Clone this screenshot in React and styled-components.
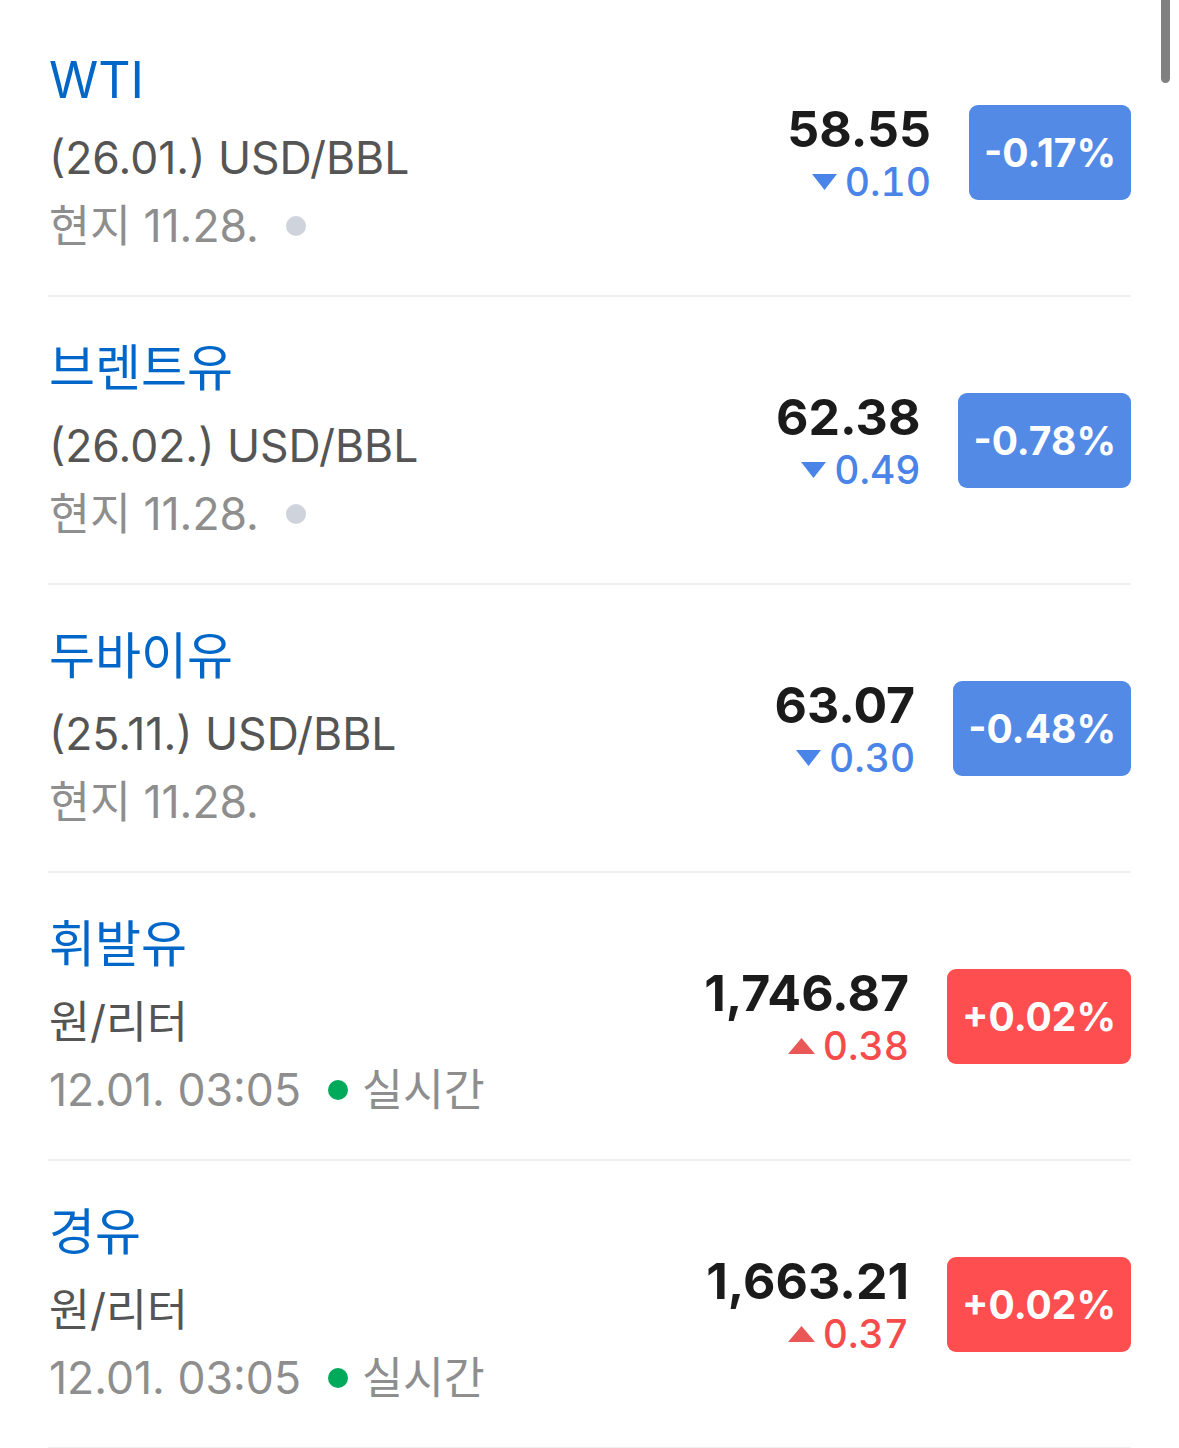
import React from "react";
import styled, { createGlobalStyle } from "styled-components";

const Global = createGlobalStyle`
  html, body { margin: 0; padding: 0; background: #fff; }
  body { font-family: Inter, "Noto Sans CJK KR", sans-serif; -webkit-font-smoothing: antialiased; }
`;

const Page = styled.div`
  position: relative;
  padding: 9px 48px 0 49px;
  background: #fff;
`;

const ScrollThumb = styled.div`
  position: fixed;
  top: -6px;
  left: 1161px;
  width: 9px;
  height: 89px;
  border-radius: 5px;
  background: #808080;
`;

const List = styled.ul`
  list-style: none;
  margin: 0;
  padding: 0;
`;

const Row = styled.li`
  display: flex;
  align-items: center;
  height: 286px;
  border-bottom: 2px solid #f0f0f0;
  margin-left: -1px;
`;

const Info = styled.div`
  flex: 1;
  display: flex;
  flex-direction: column;
  padding-left: 1px;
`;

const Title = styled.div`
  font-size: 50px;
  line-height: 70px;
  color: #0067c9;
  margin-bottom: 9px;
`;

const Sub = styled.div`
  font-size: 44.5px;
  line-height: 68px;
  color: #555555;
`;

const DateLine = styled.div`
  display: flex;
  align-items: center;
  font-size: 44.5px;
  line-height: 68px;
  color: #8e8e8e;
`;

const Dot = styled.span`
  width: 20px;
  height: 20px;
  border-radius: 50%;
  background: ${(p) => (p.$live ? "#00aa5b" : "#cfd3dc")};
  margin-left: 27px;
  margin-right: 14px;
`;

const Price = styled.div`
  display: flex;
  flex-direction: column;
  align-items: flex-end;
  margin-right: 38px;
`;

const Value = styled.div`
  font-size: 50px;
  line-height: 60px;
  font-weight: 700;
  color: #1b1b1b;
`;

const Change = styled.div`
  display: flex;
  align-items: center;
  font-size: 39px;
  line-height: 46px;
  font-weight: 500;
  font-variant-numeric: tabular-nums;
  color: ${(p) => (p.$up ? "#f54b4b" : "#4a84e8")};
  svg { margin-right: 8px; }
`;

const Badge = styled.div`
  height: 95px;
  display: flex;
  align-items: center;
  padding: 0 15px;
  border-radius: 9px;
  background: ${(p) => (p.$up ? "#ff4e4f" : "#528ae6")};
  color: #fff;
  font-size: 39px;
  font-weight: 700;
`;

const Tri = ({ up }) =>
  up ? (
    <svg width="27" height="16" viewBox="0 0 27 16">
      <polygon points="13.5,0 27,16 0,16" fill="#ea5757" />
    </svg>
  ) : (
    <svg width="25" height="16" viewBox="0 0 25 16">
      <polygon points="0,0 25,0 12.5,16" fill="#4a84e8" />
    </svg>
  );

const items = [
  { name: "WTI", sub: "(26.01.) USD/BBL", date: "현지 11.28.", dot: "gray", price: "58.55", chg: "0.10", pct: "-0.17%", up: false },
  { name: "브렌트유", sub: "(26.02.) USD/BBL", date: "현지 11.28.", dot: "gray", price: "62.38", chg: "0.49", pct: "-0.78%", up: false },
  { name: "두바이유", sub: "(25.11.) USD/BBL", date: "현지 11.28.", dot: null, price: "63.07", chg: "0.30", pct: "-0.48%", up: false },
  { name: "휘발유", sub: "원/리터", date: "12.01. 03:05", dot: "live", price: "1,746.87", chg: "0.38", pct: "+0.02%", up: true },
  { name: "경유", sub: "원/리터", date: "12.01. 03:05", dot: "live", price: "1,663.21", chg: "0.37", pct: "+0.02%", up: true },
];

export default function App() {
  return (
    <Page>
      <Global />
      <List>
        {items.map((it) => (
          <Row key={it.name}>
            <Info>
              <Title>{it.name}</Title>
              <Sub>{it.sub}</Sub>
              <DateLine>
                {it.date}
                {it.dot && <Dot $live={it.dot === "live"} />}
                {it.dot === "live" && "실시간"}
              </DateLine>
            </Info>
            <Price>
              <Value>{it.price}</Value>
              <Change $up={it.up}>
                <Tri up={it.up} />
                {it.chg}
              </Change>
            </Price>
            <Badge $up={it.up}>{it.pct}</Badge>
          </Row>
        ))}
      </List>
      <ScrollThumb />
    </Page>
  );
}
